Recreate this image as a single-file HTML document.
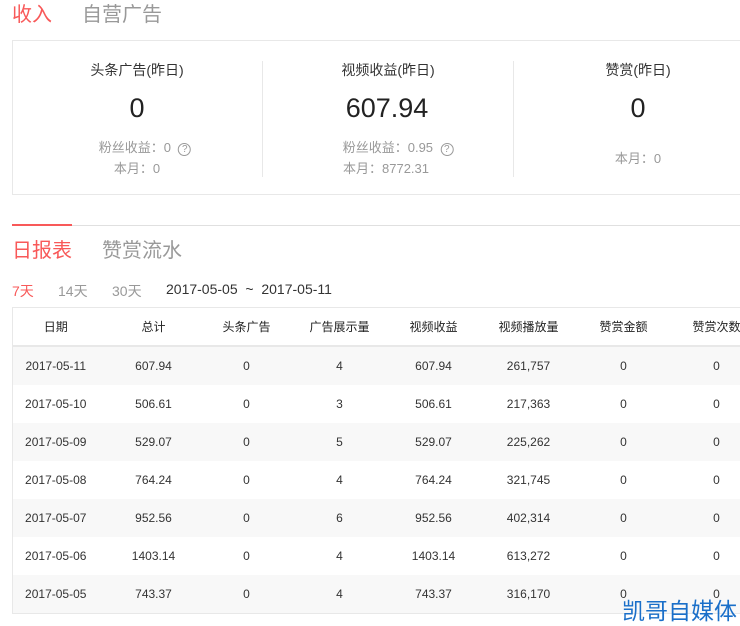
<!DOCTYPE html><html><head><meta charset="utf-8"><style>
body{margin:0;width:740px;height:621px;overflow:hidden;background:#fff;font-family:"Liberation Sans","Noto Sans CJK SC",sans-serif;position:relative}
.a{position:absolute;white-space:nowrap}
.c{transform:translateX(-50%);text-align:center}
table{position:absolute;left:12px;top:307px;width:758px;table-layout:fixed;border-collapse:collapse;border-left:1px solid #e8e8e8;border-top:1px solid #e8e8e8;font-size:12px;color:#333}
td,th{text-align:center;height:38px;padding:0;font-weight:normal}
th{height:37px;border-bottom:2px solid #e8e8e8;color:#222}
tr.s td{background:#f8f8f8}
</style></head><body>
<div class="a" style="left:12px;top:-2px;font-size:20px;color:#f85959">收入</div>
<div class="a" style="left:82px;top:-2px;font-size:20px;color:#999">自营广告</div>
<div class="a" style="left:12px;top:40px;width:740px;height:153px;border:1px solid #e8e8e8"></div>
<div class="a" style="left:262px;top:61px;width:1px;height:116px;background:#e8e8e8"></div>
<div class="a" style="left:513px;top:61px;width:1px;height:116px;background:#e8e8e8"></div>
<div class="a c" style="left:137px;top:60px;font-size:14px;color:#333">头条广告(昨日)</div>
<div class="a c" style="left:137px;top:93px;font-size:27px;color:#222">0</div>
<div class="a c" style="left:145px;top:137px;font-size:13px;color:#999">粉丝收益：0 &nbsp;<span style="display:inline-block;width:11px;height:11px;border:1px solid #999;border-radius:50%;font-size:10px;line-height:11px">?</span></div>
<div class="a c" style="left:137px;top:158px;font-size:13px;color:#999">本月：0</div>
<div class="a c" style="left:388px;top:60px;font-size:14px;color:#333">视频收益(昨日)</div>
<div class="a c" style="left:387px;top:93px;font-size:27px;color:#222">607.94</div>
<div class="a c" style="left:398px;top:137px;font-size:13px;color:#999">粉丝收益：0.95 &nbsp;<span style="display:inline-block;width:11px;height:11px;border:1px solid #999;border-radius:50%;font-size:10px;line-height:11px">?</span></div>
<div class="a c" style="left:386px;top:158px;font-size:13px;color:#999">本月：8772.31</div>
<div class="a c" style="left:638px;top:60px;font-size:14px;color:#333">赞赏(昨日)</div>
<div class="a c" style="left:638px;top:93px;font-size:27px;color:#222">0</div>
<div class="a c" style="left:638px;top:148px;font-size:13px;color:#999">本月：0</div>
<div class="a" style="left:12px;top:225px;width:728px;height:1px;background:#e0e0e0"></div>
<div class="a" style="left:12px;top:224px;width:60px;height:2px;background:#f85959"></div>
<div class="a" style="left:12px;top:234px;font-size:20px;color:#f85959">日报表</div>
<div class="a" style="left:102px;top:234px;font-size:20px;color:#999">赞赏流水</div>
<div class="a" style="left:12px;top:281px;font-size:14px;color:#f85959">7天</div>
<div class="a" style="left:58px;top:281px;font-size:14px;color:#999">14天</div>
<div class="a" style="left:112px;top:281px;font-size:14px;color:#999">30天</div>
<div class="a" style="left:166px;top:281px;font-size:14px;color:#333">2017-05-05 &nbsp;~ &nbsp;2017-05-11</div>
<table><colgroup><col style="width:86px"><col style="width:110px"><col style="width:76px"><col style="width:110px"><col style="width:78px"><col style="width:112px"><col style="width:78px"><col style="width:108px"></colgroup>
<tr><th>日期</th><th>总计</th><th>头条广告</th><th>广告展示量</th><th>视频收益</th><th>视频播放量</th><th>赞赏金额</th><th>赞赏次数</th></tr>
<tr class="s"><td>2017-05-11</td><td>607.94</td><td>0</td><td>4</td><td>607.94</td><td>261,757</td><td>0</td><td>0</td></tr>
<tr><td>2017-05-10</td><td>506.61</td><td>0</td><td>3</td><td>506.61</td><td>217,363</td><td>0</td><td>0</td></tr>
<tr class="s"><td>2017-05-09</td><td>529.07</td><td>0</td><td>5</td><td>529.07</td><td>225,262</td><td>0</td><td>0</td></tr>
<tr><td>2017-05-08</td><td>764.24</td><td>0</td><td>4</td><td>764.24</td><td>321,745</td><td>0</td><td>0</td></tr>
<tr class="s"><td>2017-05-07</td><td>952.56</td><td>0</td><td>6</td><td>952.56</td><td>402,314</td><td>0</td><td>0</td></tr>
<tr><td>2017-05-06</td><td>1403.14</td><td>0</td><td>4</td><td>1403.14</td><td>613,272</td><td>0</td><td>0</td></tr>
<tr class="s" style="border-bottom:1px solid #e8e8e8"><td>2017-05-05</td><td>743.37</td><td>0</td><td>4</td><td>743.37</td><td>316,170</td><td>0</td><td>0</td></tr>
</table>
<div class="a" style="left:622px;top:592px;font-size:23px;color:#1a6fc9">凯哥自媒体</div>
</body></html>
